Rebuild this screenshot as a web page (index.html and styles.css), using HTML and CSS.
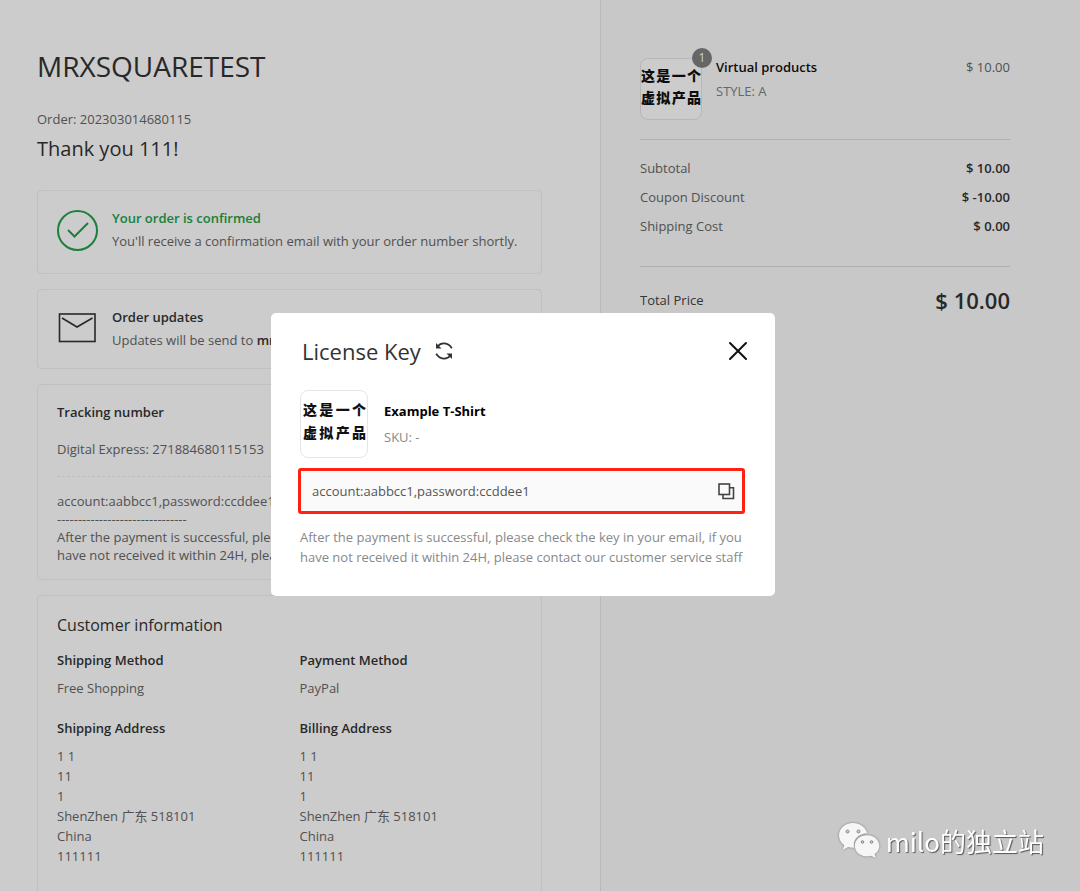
FILE: index.html
```html
<!DOCTYPE html>
<html lang="en">
<head>
    <meta charset="UTF-8">
    <meta name="viewport" content="width=device-width, initial-scale=1.0">
    <title>MRXSQUARETEST - Thank you</title>
    <link rel="stylesheet" href="styles.css">
</head>
<body class="modal-open">
    <div class="page">
        <main class="main">
            <h1>MRXSQUARETEST</h1>
            <p class="order-no">Order: 202303014680115</p>
            <h2 class="thanks">Thank you 111!</h2>

            <section class="card notice confirmed">
                <svg class="notice-icon" viewBox="0 0 41 41" fill="none" stroke="#22a04b" stroke-width="2">
                    <circle cx="20.5" cy="20.5" r="19.5"/>
                    <path d="M11 20l6.500 6.500L31 13"/>
                </svg>
                <div>
                    <h3>Your order is confirmed</h3>
                    <p>You'll receive a confirmation email with your order number shortly.</p>
                </div>
            </section>

            <section class="card notice">
                <svg class="notice-icon" viewBox="0 0 41 41" fill="none" stroke="#333" stroke-width="1.600">
                    <rect x="2.500" y="5" width="35.500" height="27.500"/>
                    <path d="M5 9L20 18L35.500 9"/>
                </svg>
                <div>
                    <h3>Order updates</h3>
                    <p>Updates will be send to <b>mrx</b></p>
                </div>
            </section>

            <section class="card tracking">
                <h3>Tracking number</h3>
                <p class="express">Digital Express: 271884680115153</p>
                <div class="tracking-note">
                    account:aabbcc1,password:ccddee1<br>
                    -------------------------------<br>
                    After the payment is successful, please check the key in your email, if you have not received it within 24H, please contact our customer service staff
                </div>
            </section>

            <section class="card customer">
                <h2>Customer information</h2>
                <div class="customer-grid">
                    <div>
                        <h3>Shipping Method</h3>
                        <p>Free Shopping</p>
                    </div>
                    <div>
                        <h3>Payment Method</h3>
                        <p>PayPal</p>
                    </div>
                    <div>
                        <h3>Shipping Address</h3>
                        <p>1 1<br>11<br>1<br>ShenZhen 广东 518101<br>China<br>111111</p>
                    </div>
                    <div>
                        <h3>Billing Address</h3>
                        <p>1 1<br>11<br>1<br>ShenZhen 广东 518101<br>China<br>111111</p>
                    </div>
                </div>
            </section>
        </main>

        <aside class="summary">
            <div class="product">
                <div class="thumb">
                    <span>这是一个</span><span>虚拟产品</span>
                    <em class="badge">1</em>
                </div>
                <div class="product-info">
                    <h3>Virtual products</h3>
                    <p>STYLE: A</p>
                </div>
                <span class="product-price">$ 10.00</span>
            </div>
            <dl class="costs">
                <div><dt>Subtotal</dt><dd>$ 10.00</dd></div>
                <div><dt>Coupon Discount</dt><dd>$ -10.00</dd></div>
                <div><dt>Shipping Cost</dt><dd>$ 0.00</dd></div>
            </dl>
            <div class="total">
                <span>Total Price</span>
                <strong>$ 10.00</strong>
            </div>
        </aside>
    </div>

    <div class="overlay">
        <div class="modal" role="dialog" aria-labelledby="modalTitle">
            <div class="modal-head">
                <h2 id="modalTitle">License Key</h2>
                <button type="button" class="icon-btn refresh" aria-label="Refresh">
                    <svg width="18" height="18" viewBox="0 0 18 18" fill="none" stroke="#333" stroke-width="1.800">
                        <path d="M2.500 4.500C6 .2 13 0 16.800 6.300"/>
                        <path d="M15.500 13.500C12 17.800 5 18 1.200 11.700"/>
                        <path d="M1 1v5.500h5.500z" fill="#333" stroke="none"/>
                        <path d="M17 17v-5.500h-5.500z" fill="#333" stroke="none"/>
                    </svg>
                </button>
                <button type="button" class="icon-btn close" aria-label="Close">
                    <svg width="20" height="20" viewBox="0 0 20 20" fill="none" stroke="#111" stroke-width="2" stroke-linecap="round">
                        <path d="M2 2l16 16M18 2L2 18"/>
                    </svg>
                </button>
            </div>
            <div class="modal-product">
                <div class="thumb thumb-lg">
                    <span>这是一个</span><span>虚拟产品</span>
                </div>
                <div>
                    <h3>Example T-Shirt</h3>
                    <p>SKU: -</p>
                </div>
            </div>
            <div class="key-box">
                <input type="text" value="account:aabbcc1,password:ccddee1" aria-label="License key" readonly>
                <button type="button" class="icon-btn copy" aria-label="Copy">
                    <svg width="18" height="18" viewBox="0 0 18 18" fill="none" stroke="#444" stroke-width="1.600">
                        <rect x="2" y="2" width="10.500" height="10.500"/>
                        <path d="M12.500 5.800h4v10.700H6v-4"/>
                    </svg>
                </button>
            </div>
            <p class="modal-note">After the payment is successful, please check the key in your email, if you have not received it within 24H, please contact our customer service staff</p>
        </div>
    </div>

    <div class="watermark">
        <svg width="42" height="38" viewBox="0 0 42 38">
            <path d="M15 1C7 1 1 6.500 1 13.500c0 4 2 7.300 5.200 9.600L4.800 28l5.400-2.900c1.500.4 3.100.7 4.800.7h1.200c-.3-1-.4-1.900-.4-2.900 0-6.500 6-11.600 13.400-11.600C28 5.300 22 1 15 1z" fill="#f6f6f6"/>
            <path d="M29 13.200c-6.900 0-12.300 4.700-12.300 10.500S22.100 34.300 29 34.300c1.500 0 2.900-.2 4.200-.6l4.600 2.500-1.200-4.100c2.900-1.900 4.700-5 4.700-8.400 0-5.800-5.400-10.500-12.300-10.500z" fill="#f6f6f6"/>
            <g fill="#ccc" stroke="#888" stroke-width="1">
                <circle cx="9.500" cy="9.500" r="1.500"/>
                <circle cx="20.500" cy="9.500" r="1.500"/>
                <circle cx="24.500" cy="20" r="1.300"/>
                <circle cx="33.500" cy="20" r="1.300"/>
            </g>
        </svg>
        <span>milo的独立站</span>
    </div>
</body>
</html>
```
FILE: styles.css
```css
* {
    box-sizing: border-box;
}
body {
    margin: 0;
    font-family: "Open Sans", "Noto Sans CJK SC", sans-serif;
    font-size: 13px;
    line-height: 20px;
    color: #666;
    background: #fff;
}
/* no page scroll behind the modal */
.modal-open .page {
    height: 100vh;
    overflow: hidden;
}
h1, h2, h3, p, dl, dd {
    margin: 0;
}
h1, h2 {
    font-weight: 400;
    color: #333;
}
h3 {
    font-size: 13px;
    font-weight: 600;
    color: #333;
}
.page {
    display: grid;
    grid-template-columns: 5fr 4fr;
    min-height: 100vh;
}

/* left column */
.main {
    padding: 46px 58px 40px 37px;
}
h1 {
    font-size: 28px;
    line-height: 40px;
}
.order-no {
    margin-top: 23px;
}
.thanks {
    margin: 4px 0 25px;
    font-size: 20px;
    line-height: 32px;
}
.card {
    margin-bottom: 15px;
    padding: 17px 19px 15px;
    border: 1px solid #f0f0f0;
    border-radius: 4px;
}
.notice {
    display: flex;
    align-items: center;
    gap: 14px;
    padding-top: 16px;
    padding-bottom: 16px;
    line-height: 23px;
}
.confirmed {
    padding-bottom: 20px;
}
.confirmed h3 {
    color: #22a04b;
}
.notice-icon {
    width: 41px;
    height: 41px;
    flex: none;
}
.notice b {
    font-weight: 600;
    color: #333;
}
.express {
    margin-top: 17px;
    padding-bottom: 17px;
    border-bottom: 1px dashed #eee;
}
.tracking-note {
    margin-top: 15px;
    line-height: 18px;
}
.customer {
    padding-bottom: 40px;
}
.customer h2 {
    font-size: 16px;
    line-height: 24px;
}
.customer-grid {
    display: grid;
    grid-template-columns: 1fr 1fr;
    gap: 20px;
    margin-top: 13px;
}
.customer-grid p {
    margin-top: 8px;
}

/* right column */
.summary {
    padding: 55px 70px 40px 39px;
    border-left: 1px solid #e6e6e6;
    background: #fafafa;
}
.product {
    display: flex;
    gap: 14px;
    padding-bottom: 19px;
    border-bottom: 1px solid #ddd;
    line-height: 24px;
}
.thumb {
    position: relative;
    flex: none;
    width: 62px;
    height: 62px;
    margin-top: 3px;
    padding-top: 5px;
    border: 1px solid #e5e5e5;
    border-radius: 8px;
    background: #fff;
    color: #111;
    font-family: "Noto Sans CJK SC", sans-serif;
    font-size: 14px;
    font-weight: 900;
    line-height: 22px;
    white-space: nowrap;
}
.thumb span {
    display: block;
    text-align: justify;
    text-align-last: justify;
}
.thumb-lg {
    width: 68px;
    height: 68px;
    margin-top: 0;
    padding: 7px 1px 0 2px;
    line-height: 23px;
}
.badge {
    position: absolute;
    top: -11px;
    right: -11px;
    width: 20px;
    height: 20px;
    border-radius: 50%;
    background: #808080;
    color: #fff;
    font: normal 12px/20px "Open Sans", sans-serif;
    text-align: center;
}
.product-info {
    flex: 1;
}
.product-info h3 {
    color: #111;
}
.product-info p {
    color: #808080;
}
.costs {
    padding: 14px 0 25px;
    border-bottom: 1px solid #ddd;
    line-height: 29px;
}
.costs div, .total {
    display: flex;
    justify-content: space-between;
}
.costs dd {
    font-weight: 600;
    color: #333;
}
.total {
    align-items: center;
    padding-top: 17px;
    line-height: 32px;
    color: #444;
}
.total strong {
    font-size: 22px;
    font-weight: 600;
    color: #333;
}

/* license key modal */
.overlay {
    position: fixed;
    inset: 0;
    display: flex;
    align-items: center;
    justify-content: center;
    padding: 18px 34px 0 0;
    background: rgba(0,0,0,0.2);
}
.modal {
    width: 504px;
    padding: 22px 30px 29px 27px;
    border-radius: 5px;
    background: #fff;
}
.modal-head {
    display: flex;
    align-items: center;
    padding-left: 4px;
}
.modal-head h2 {
    font-size: 22px;
    line-height: 32px;
}
.icon-btn {
    display: flex;
    padding: 0;
    border: none;
    background: none;
    cursor: pointer;
}
.refresh {
    margin-left: 14px;
}
.close {
    margin-left: auto;
    margin-right: -3px;
}
.modal-product {
    display: flex;
    gap: 16px;
    margin: 23px 0 10px 2px;
    line-height: 26px;
    color: #888;
}
.modal-product > div:last-child {
    padding-top: 8px;
}
.modal-product h3 {
    font-weight: 700;
    color: #000;
}
.key-box {
    display: flex;
    align-items: center;
    height: 46px;
    padding: 0 7px 0 11px;
    border: 3px solid #ff2212;
    border-radius: 3px;
    background: #fafafa;
}
.key-box input {
    flex: 1;
    padding: 0;
    border: none;
    outline: none;
    background: none;
    color: #555;
    font: inherit;
}
.modal-note {
    margin: 13px 0 0 2px;
    color: #888;
}

.watermark {
    position: fixed;
    right: 36px;
    bottom: 30px;
    display: flex;
    align-items: center;
    gap: 6px;
    color: #fff;
    font-family: "Noto Sans CJK SC", sans-serif;
    font-size: 26px;
    line-height: 40px;
    text-shadow: 1px 1px 1px #555;
}
.watermark svg {
    filter: drop-shadow(0 0 1px #777);
}
```
